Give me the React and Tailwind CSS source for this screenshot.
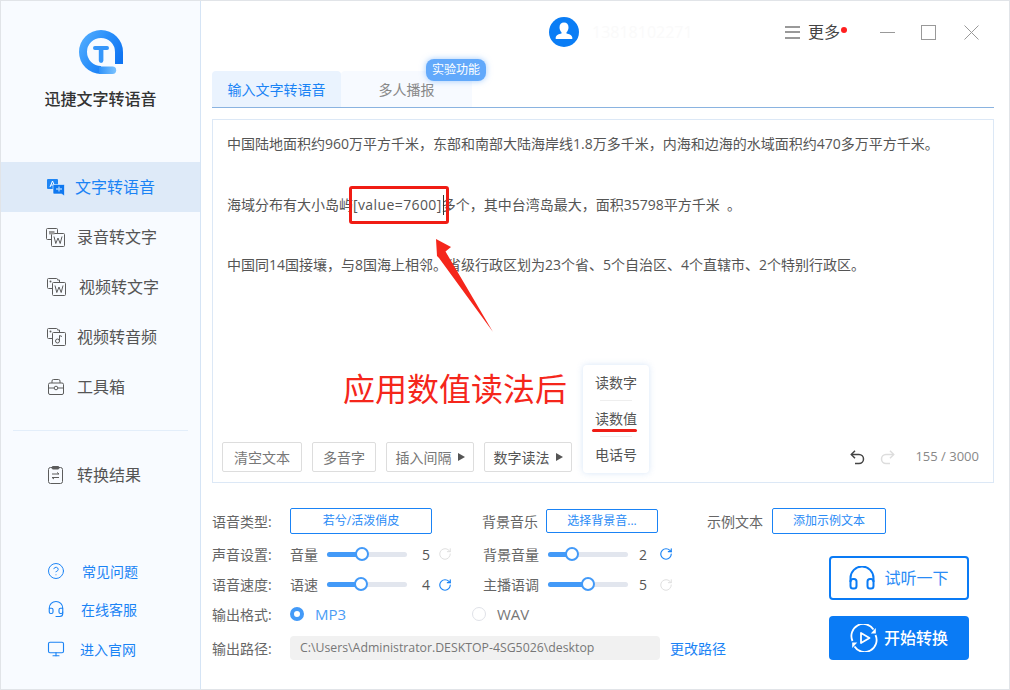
import React from "react";
import { CircleHelp, Headset, Monitor, RotateCw } from "lucide-react";

function Logo() {
  return (
    <svg width="44" height="44" viewBox="0 0 44 44">
      <defs>
        <linearGradient id="lg" x1="0" y1="0" x2="1" y2="0.6">
          <stop offset="0" stopColor="#59b2ff" />
          <stop offset="0.55" stopColor="#2a8ffa" />
          <stop offset="1" stopColor="#0f74f2" />
        </linearGradient>
        <linearGradient id="lg2" x1="0" y1="0" x2="1" y2="0">
          <stop offset="0" stopColor="#2f92f9" />
          <stop offset="1" stopColor="#7cc3ff" />
        </linearGradient>
      </defs>
      <path d="M44 34V22A22 22 0 1 0 22 44V36A14 14 0 1 1 36 22V34Z" fill="url(#lg)" />
      <path d="M20 36.600H33.500a3.700 3.700 0 0 1 0 7.400H20Z" fill="url(#lg2)" />
      <path d="M14 18a1.900 1.900 0 0 1 1.900-1.900H28.100a1.900 1.900 0 0 1 0 3.800h-3.700v10.700a2.300 2.300 0 0 1-4.600 0V19.900H15.900A1.900 1.900 0 0 1 14 18Z" fill="#3596fa" />
    </svg>
  );
}

function TranslateIcon() {
  return (
    <svg width="18" height="17" viewBox="0 0 18 17">
      <rect x="0" y="0" width="11" height="10" rx="1" fill="#1f86f5" />
      <path d="M3 8 5.500 2 8 8M4 6h3" stroke="#fff" strokeWidth="1" fill="none" />
      <path d="M6 11V6.500a1 1 0 0 1 1-1h9.500a1 1 0 0 1 1 1V17l-3-2H7a1 1 0 0 1-1-1Z" fill="#0f78f0" stroke="#f0f6fd" strokeWidth="0.6" />
      <path d="M9 10h6M12 7.500v5" stroke="#9fcbfa" strokeWidth="1.400" />
    </svg>
  );
}

function FileWIcon() {
  return (
    <svg width="19" height="19" viewBox="0 0 19 19" fill="none" stroke="#5c5c5c" strokeWidth="1">
      <path d="M6 11.500H1.500a1 1 0 0 1-1-1V1.500a1 1 0 0 1 1-1h9a1 1 0 0 1 1 1V5" />
      <rect x="5.500" y="5.500" width="13" height="13" rx="1" />
      <path d="M8 8.500 9.800 15.500 12 10 14.200 15.500 16 8.500" />
      <rect x="3" y="3" width="5.500" height="3.400" fill="#9a9a9a" stroke="none" />
    </svg>
  );
}

function VideoWIcon() {
  return (
    <svg width="19" height="18" viewBox="0 0 19 18" fill="none" stroke="#5c5c5c" strokeWidth="1">
      <path d="M5 10.500H1.500a1 1 0 0 1-1-1v-8a1 1 0 0 1 1-1h8a1 1 0 0 1 1 1V2l2 0V4.500" />
      <rect x="5.500" y="4.500" width="13" height="13" rx="1" />
      <path d="M8 7.500 9.800 14.500 12 9 14.200 14.500 16 7.500" />
      <circle cx="3.500" cy="3.500" r="1" fill="#5c5c5c" stroke="none" />
    </svg>
  );
}

function VideoNoteIcon() {
  return (
    <svg width="19" height="18" viewBox="0 0 19 18" fill="none" stroke="#5c5c5c" strokeWidth="1">
      <path d="M5 10.500H1.500a1 1 0 0 1-1-1v-8a1 1 0 0 1 1-1h8a1 1 0 0 1 1 1V2l2 0V4.500" />
      <rect x="5.500" y="4.500" width="13" height="13" rx="1" />
      <circle cx="10.500" cy="13" r="2" />
      <path d="M12.500 13V7.500l2.500 1" />
      <circle cx="3.500" cy="3.500" r="1" fill="#5c5c5c" stroke="none" />
    </svg>
  );
}

function ToolboxIcon() {
  return (
    <svg width="16" height="16" viewBox="0 0 16 16" fill="none" stroke="#5c5c5c" strokeWidth="1">
      <rect x="0.500" y="4" width="15" height="11.500" rx="1.500" />
      <path d="M4 4V2a1.500 1.500 0 0 1 1.500-1.500h5A1.500 1.500 0 0 1 12 2v2" />
      <path d="M0.500 9H6M10 9h5.500" />
      <circle cx="8" cy="9" r="1.800" />
    </svg>
  );
}

function ResultIcon() {
  return (
    <svg width="15" height="18" viewBox="0 0 15 18" fill="none" stroke="#5c5c5c" strokeWidth="1">
      <rect x="0.500" y="1.500" width="14" height="16" rx="2" />
      <rect x="4" y="0.500" width="7" height="2.500" rx="1" fill="#5c5c5c" />
      <path d="M4 8h7l-2-1.500M11 11.500H4l2 1.500" />
    </svg>
  );
}

function HeadphonesIcon() {
  return (
    <svg width="26" height="24" viewBox="0 0 26 24" fill="none" stroke="#0a7bf5" strokeWidth="2">
      <path d="M1.500 16V12a11.500 11.500 0 0 1 23 0v4" />
      <rect x="1.500" y="13" width="6" height="9.500" rx="2.500" />
      <rect x="18.500" y="13" width="6" height="9.500" rx="2.500" />
    </svg>
  );
}

function StartIcon() {
  return (
    <svg width="28" height="28" viewBox="0 0 28 28" fill="none" stroke="#fff" strokeWidth="1.800">
      <path d="M2.500 17A12 12 0 0 1 23.500 5.500" />
      <path d="M25.500 11A12 12 0 0 1 4.500 22.500" />
      <path d="M25.800 4v5.500h-5Z" fill="#fff" strokeWidth="0" />
      <path d="M2.200 24v-5.500h5Z" fill="#fff" strokeWidth="0" />
      <path d="M11 9 19.500 14 11 19Z" strokeLinejoin="round" />
    </svg>
  );
}

function UndoIcon({ className }) {
  return (
    <svg width="15" height="15" viewBox="0 0 15 15" fill="none" stroke="currentColor" strokeWidth="1.500" className={className}>
      <path d="M1.500 4.500H9a4.500 4.500 0 0 1 0 9H5" />
      <path d="M5 .8 1.300 4.500 5 8.200" />
    </svg>
  );
}

function RedoIcon({ className }) {
  return (
    <svg width="15" height="15" viewBox="0 0 15 15" fill="none" stroke="currentColor" strokeWidth="1.500" className={className}>
      <path d="M13.500 4.500H6a4.500 4.500 0 0 0 0 9h4" />
      <path d="M10 .8 13.700 4.500 10 8.200" />
    </svg>
  );
}

function NavItem({ icon, label, textClass, active, iconClass }) {
  return (
    <div className={`flex items-center h-[50px] ${active ? "bg-[#deeaf8] text-[#1a83f5]" : "text-[#555555]"}`}>
      <div className={`flex items-center ${iconClass}`}>{icon}</div>
      <span className={`text-[16px] leading-none ${textClass}`}>{label}</span>
    </div>
  );
}

function BlueBtn({ children, className }) {
  return (
    <div className={`flex items-center justify-center border border-[#1a83f5] rounded-[2px] text-[12px] text-[#2a8bf6] ${className}`}>
      {children}
    </div>
  );
}

function Slider({ width, thumb, value, active, valueClass }) {
  return (
    <div className="flex items-center">
      <div className="relative w-[80px] h-[5px] rounded-full bg-[#e2e6ee]">
        <div className="h-full rounded-full bg-[#439af8]" style={{ width }} />
        <div className="absolute top-[-5px] w-[14px] h-[14px] rounded-full bg-white border-2 border-[#439af8]" style={{ left: thumb }} />
      </div>
      <span className={`w-[28px] text-right text-[14px] text-[#555555] ${valueClass}`}>{value}</span>
      <RotateCw size={14} strokeWidth={active ? 2 : 1.6} className={`ml-[3px] ${active ? "text-[#1a83f5]" : "text-[#dddddd]"}`} />
    </div>
  );
}

function ToolBtn({ children, className, arrow }) {
  return (
    <div className={`flex items-center justify-center h-[30px] border border-[#dddddd] rounded-[2px] text-[14px] ${className}`}>
      {children}
      {arrow && <span className="ml-[6px] w-0 h-0 border-y-[4px] border-y-transparent border-l-[7px] border-l-[#555555]" />}
    </div>
  );
}

export default function App() {
  return (
    <div
      className="relative flex w-[1010px] h-[690px] bg-white border border-[#e1e4e8] overflow-hidden"
      style={{ fontFamily: '"Open Sans", "Noto Sans CJK SC", sans-serif' }}
    >
      {/* sidebar */}
      <aside className="flex flex-col w-[200px] shrink-0 bg-[#f8fbff] border-r border-[#d5e4f5]">
        <div className="flex pt-[29px] pl-[78px]"><Logo /></div>
        <div className="text-center text-[16px] leading-[24px] font-medium text-[#333333] mt-[13px]">迅捷文字转语音</div>
        <nav className="mt-[51px]">
          <NavItem active icon={<TranslateIcon />} label="文字转语音" iconClass="pl-[46px]" textClass="ml-[10px]" />
          <NavItem icon={<FileWIcon />} label="录音转文字" iconClass="pl-[45px]" textClass="ml-[12px]" />
          <NavItem icon={<VideoWIcon />} label="视频转文字" iconClass="pl-[46px]" textClass="ml-[13px]" />
          <NavItem icon={<VideoNoteIcon />} label="视频转音频" iconClass="pl-[46px]" textClass="ml-[11px]" />
          <NavItem icon={<ToolboxIcon />} label="工具箱" iconClass="pl-[47px]" textClass="ml-[13px]" />
        </nav>
        <div className="h-px bg-[#e3eefa] mx-[12px] mt-[18px]" />
        <div className="mt-[19px]">
          <NavItem icon={<ResultIcon />} label="转换结果" iconClass="pl-[47px]" textClass="ml-[14px]" />
        </div>
        <div className="mt-[52px] text-[#1a83f5] text-[14px]">
          <div className="flex items-center h-[38px] pl-[46px]"><CircleHelp size={18} strokeWidth={1.3} /><span className="ml-[17px]">常见问题</span></div>
          <div className="flex items-center h-[38px] pl-[46px]"><Headset size={18} strokeWidth={1.5} /><span className="ml-[16px]">在线客服</span></div>
          <div className="flex items-center h-[42px] pl-[46px]"><Monitor size={18} strokeWidth={1.5} /><span className="ml-[15px]">进入官网</span></div>
        </div>
      </aside>

      {/* main */}
      <main className="flex flex-col flex-1 pl-[11px] pr-[15px]">
        <header className="relative flex items-center h-[62px] mb-[8px]">
          <div className="flex items-center w-[584px] pl-[337px]">
            <svg width="30" height="30" viewBox="0 0 30 30">
              <circle cx="15" cy="15" r="15" fill="#0a7df5" />
              <path d="M15 5.500c2.800 0 4.500 2 4.500 4.800 0 2.400-1 4-2 5v1.200c2.500.6 5.500 1.500 5.800 4v1.500H6.700V20.500c.3-2.500 3.300-3.400 5.800-4v-1.200c-1-1-2-2.600-2-5 0-2.800 1.700-4.800 4.500-4.800Z" fill="#fff" />
            </svg>
            <span className="ml-[13px] text-[16px] text-[#fafafa]">13818102271</span>
          </div>
          <div className="flex flex-col gap-[3.500px] -ml-[11px]">
            <span className="w-[15px] h-[2px] bg-[#999999]" />
            <span className="w-[15px] h-[2px] bg-[#999999]" />
            <span className="w-[15px] h-[2px] bg-[#999999]" />
          </div>
          <span className="ml-[8px] text-[16px] text-[#444444]">更多</span>
          <span className="self-start mt-[26px] ml-[1px] w-[6px] h-[6px] rounded-full bg-[#ff1f1f]" />
          <span className="ml-[33px] w-[15px] h-px bg-[#999999]" />
          <span className="ml-[26px] w-[15px] h-[15px] border border-[#999999]" />
          <svg className="ml-[28px]" width="15" height="15" viewBox="0 0 15 15" fill="none" stroke="#999999" strokeWidth="1"><path d="M.5.5l14 14M14.500.5l-14 14" /></svg>
        </header>

        <div className="relative flex h-[37px] border-b border-[#8ab3e0] shrink-0">
          <div className="flex items-center justify-center w-[129px] rounded-t-[4px] bg-[#eaf3fe] text-[14px] text-[#1a83f5]">输入文字转语音</div>
          <div className="flex items-center justify-center w-[131px] rounded-t-[4px] bg-[#f7faff] text-[14px] text-[#888888]">多人播报</div>
          <div className="absolute left-[214px] top-[-12px] flex items-center justify-center w-[60px] h-[22px] rounded-[8px] bg-[#62a9fb] text-[12px] text-white shadow-[0_0_6px_rgba(98,169,251,0.6)]">实验功能</div>
        </div>

        <section className="relative flex flex-col h-[364px] mt-[11px] shrink-0 border border-[#dce8f6] px-[9px] pb-[10px]">
          <div className="px-[5px] pt-[9px] text-[14px] leading-[30px] text-[#555555]">
            <p className="whitespace-nowrap">中国陆地面积约960万平方千米，东部和南部大陆海岸线1.8万多千米，内海和边海的水域面积约470多万平方千米。</p>
            <p className="mt-[31px] whitespace-nowrap">海域分布有大小岛屿<span className="tracking-[0.4px]">[value=7600]</span>多个，其中台湾岛最大，面积35798平方千米&nbsp;&nbsp;。</p>
            <p className="mt-[30px] whitespace-nowrap">中国同14国接壤，与8国海上相邻。省级行政区划为23个省、5个自治区、4个直辖市、2个特别行政区。</p>
          </div>
          <div className="flex items-center mt-auto">
            <ToolBtn className="w-[80px] text-[#777777]">清空文本</ToolBtn>
            <ToolBtn className="w-[64px] ml-[10px] text-[#777777]">多音字</ToolBtn>
            <ToolBtn arrow className="w-[88px] ml-[10px] text-[#777777]">插入间隔</ToolBtn>
            <ToolBtn arrow className="w-[88px] ml-[10px] text-[#555555]">数字读法</ToolBtn>
            <div className="flex items-center ml-auto pr-[5px]">
              <UndoIcon className="text-[#444444]" />
              <RedoIcon className="ml-[15px] text-[#dddddd]" />
              <span className="ml-[20px] text-[13px] text-[#888888]">155 / 3000</span>
            </div>
          </div>
          {/* number popup */}
          <div className="absolute left-[370px] top-[245px] flex flex-col items-center w-[66px] h-[108px] rounded-[4px] bg-white shadow-[0_0_6px_rgba(120,170,230,0.3)] text-[14px] text-[#555555]">
            <span className="mt-[8px] leading-[20px]">读数字</span>
            <span className="w-[32px] h-px bg-[#eeeeee] mt-[7px]" />
            <span className="mt-[8px] leading-[20px]">读数值</span>
            <span className="self-start ml-[9px] w-[45px] h-[3px] rounded-full bg-[#f01c14]" />
            <span className="w-[32px] h-px bg-[#eeeeee] mt-[4px]" />
            <span className="mt-[8px] leading-[20px]">电话号</span>
          </div>
        </section>

        <div className="flex items-center h-[26px] mt-[25px] text-[14px] text-[#666666] shrink-0">
          <span className="w-[78px]">语音类型:</span>
          <BlueBtn className="w-[142px] h-[26px]">若兮/活泼俏皮</BlueBtn>
          <span className="w-[64px] ml-[50px]">背景音乐</span>
          <BlueBtn className="w-[112px] h-[24px]">选择背景音...</BlueBtn>
          <span className="w-[65px] ml-[49px]">示例文本</span>
          <BlueBtn className="w-[114px] h-[26px]">添加示例文本</BlueBtn>
        </div>

        <div className="flex mt-[5px] text-[14px] text-[#666666]">
          <div className="w-[617px]">
            <div className="flex items-center h-[30px]">
              <span className="w-[78px]">声音设置:</span>
              <span className="w-[37px]">音量</span>
              <Slider width="35px" thumb="28px" value="5" valueClass="pr-[5px]" />
              <span className="w-[65px] ml-[31px]">背景音量</span>
              <Slider width="24px" thumb="17px" value="2" active valueClass="pr-[9px]" />
            </div>
            <div className="flex items-center h-[31px]">
              <span className="w-[78px]">语音速度:</span>
              <span className="w-[37px]">语速</span>
              <Slider width="34px" thumb="27px" value="4" active valueClass="pr-[5px]" />
              <span className="w-[65px] ml-[31px]">主播语调</span>
              <Slider width="40px" thumb="33px" value="5" valueClass="pr-[9px]" />
            </div>
            <div className="flex items-center h-[28px]">
              <span className="w-[78px]">输出格式:</span>
              <span className="w-[14px] h-[14px] rounded-full border-[4.500px] border-[#439af8] bg-white" />
              <span className="ml-[11px] w-[157px] text-[15px] text-[#4b9cf5]">MP3</span>
              <span className="w-[14px] h-[14px] rounded-full border border-[#e0e2e8] bg-white" />
              <span className="ml-[11px] text-[15px] text-[#777777]">WAV</span>
            </div>
            <div className="flex items-center h-[26px] mt-[7px]">
              <span className="w-[78px]">输出路径:</span>
              <div className="flex items-center w-[370px] h-[24px] pl-[10px] rounded-[4px] bg-[#f1f1f1] text-[12.300px] text-[#777777] whitespace-nowrap">C:\Users\Administrator.DESKTOP-4SG5026\desktop</div>
              <span className="ml-[10px] text-[#1a83f5]">更改路径</span>
            </div>
          </div>
          <div className="flex flex-col w-[140px] mt-[17px]">
            <div className="flex items-center justify-center h-[44px] border-2 border-[#0a7bf5] rounded-[4px] text-[16px] text-[#2a8bf6]">
              <HeadphonesIcon /><span className="ml-[9px]">试听一下</span>
            </div>
            <div className="flex items-center justify-center h-[44px] mt-[16px] rounded-[4px] bg-[#0a7bf5] text-[16px] font-medium text-white">
              <StartIcon /><span className="ml-[6px]">开始转换</span>
            </div>
          </div>
        </div>
      </main>

      {/* screenshot annotations */}
      <div className="absolute left-[348px] top-[185px] w-[100px] h-[38px] border-[3px] border-[#f01c14] rounded-[3px]" />
      <div className="absolute left-[442px] top-[194px] w-px h-[20px] bg-[#333333]" />
      <svg className="absolute left-[430px] top-[232px]" width="70" height="105" viewBox="0 0 70 105">
        <path d="M5 6 20 14 14.500 18.500 62 99 8 25 6 23Z" fill="#f5261b" />
      </svg>
      <div className="absolute left-[342px] top-[366px] text-[32px] leading-[44px] text-[#f5261b] whitespace-nowrap">应用数值读法后</div>
    </div>
  );
}
